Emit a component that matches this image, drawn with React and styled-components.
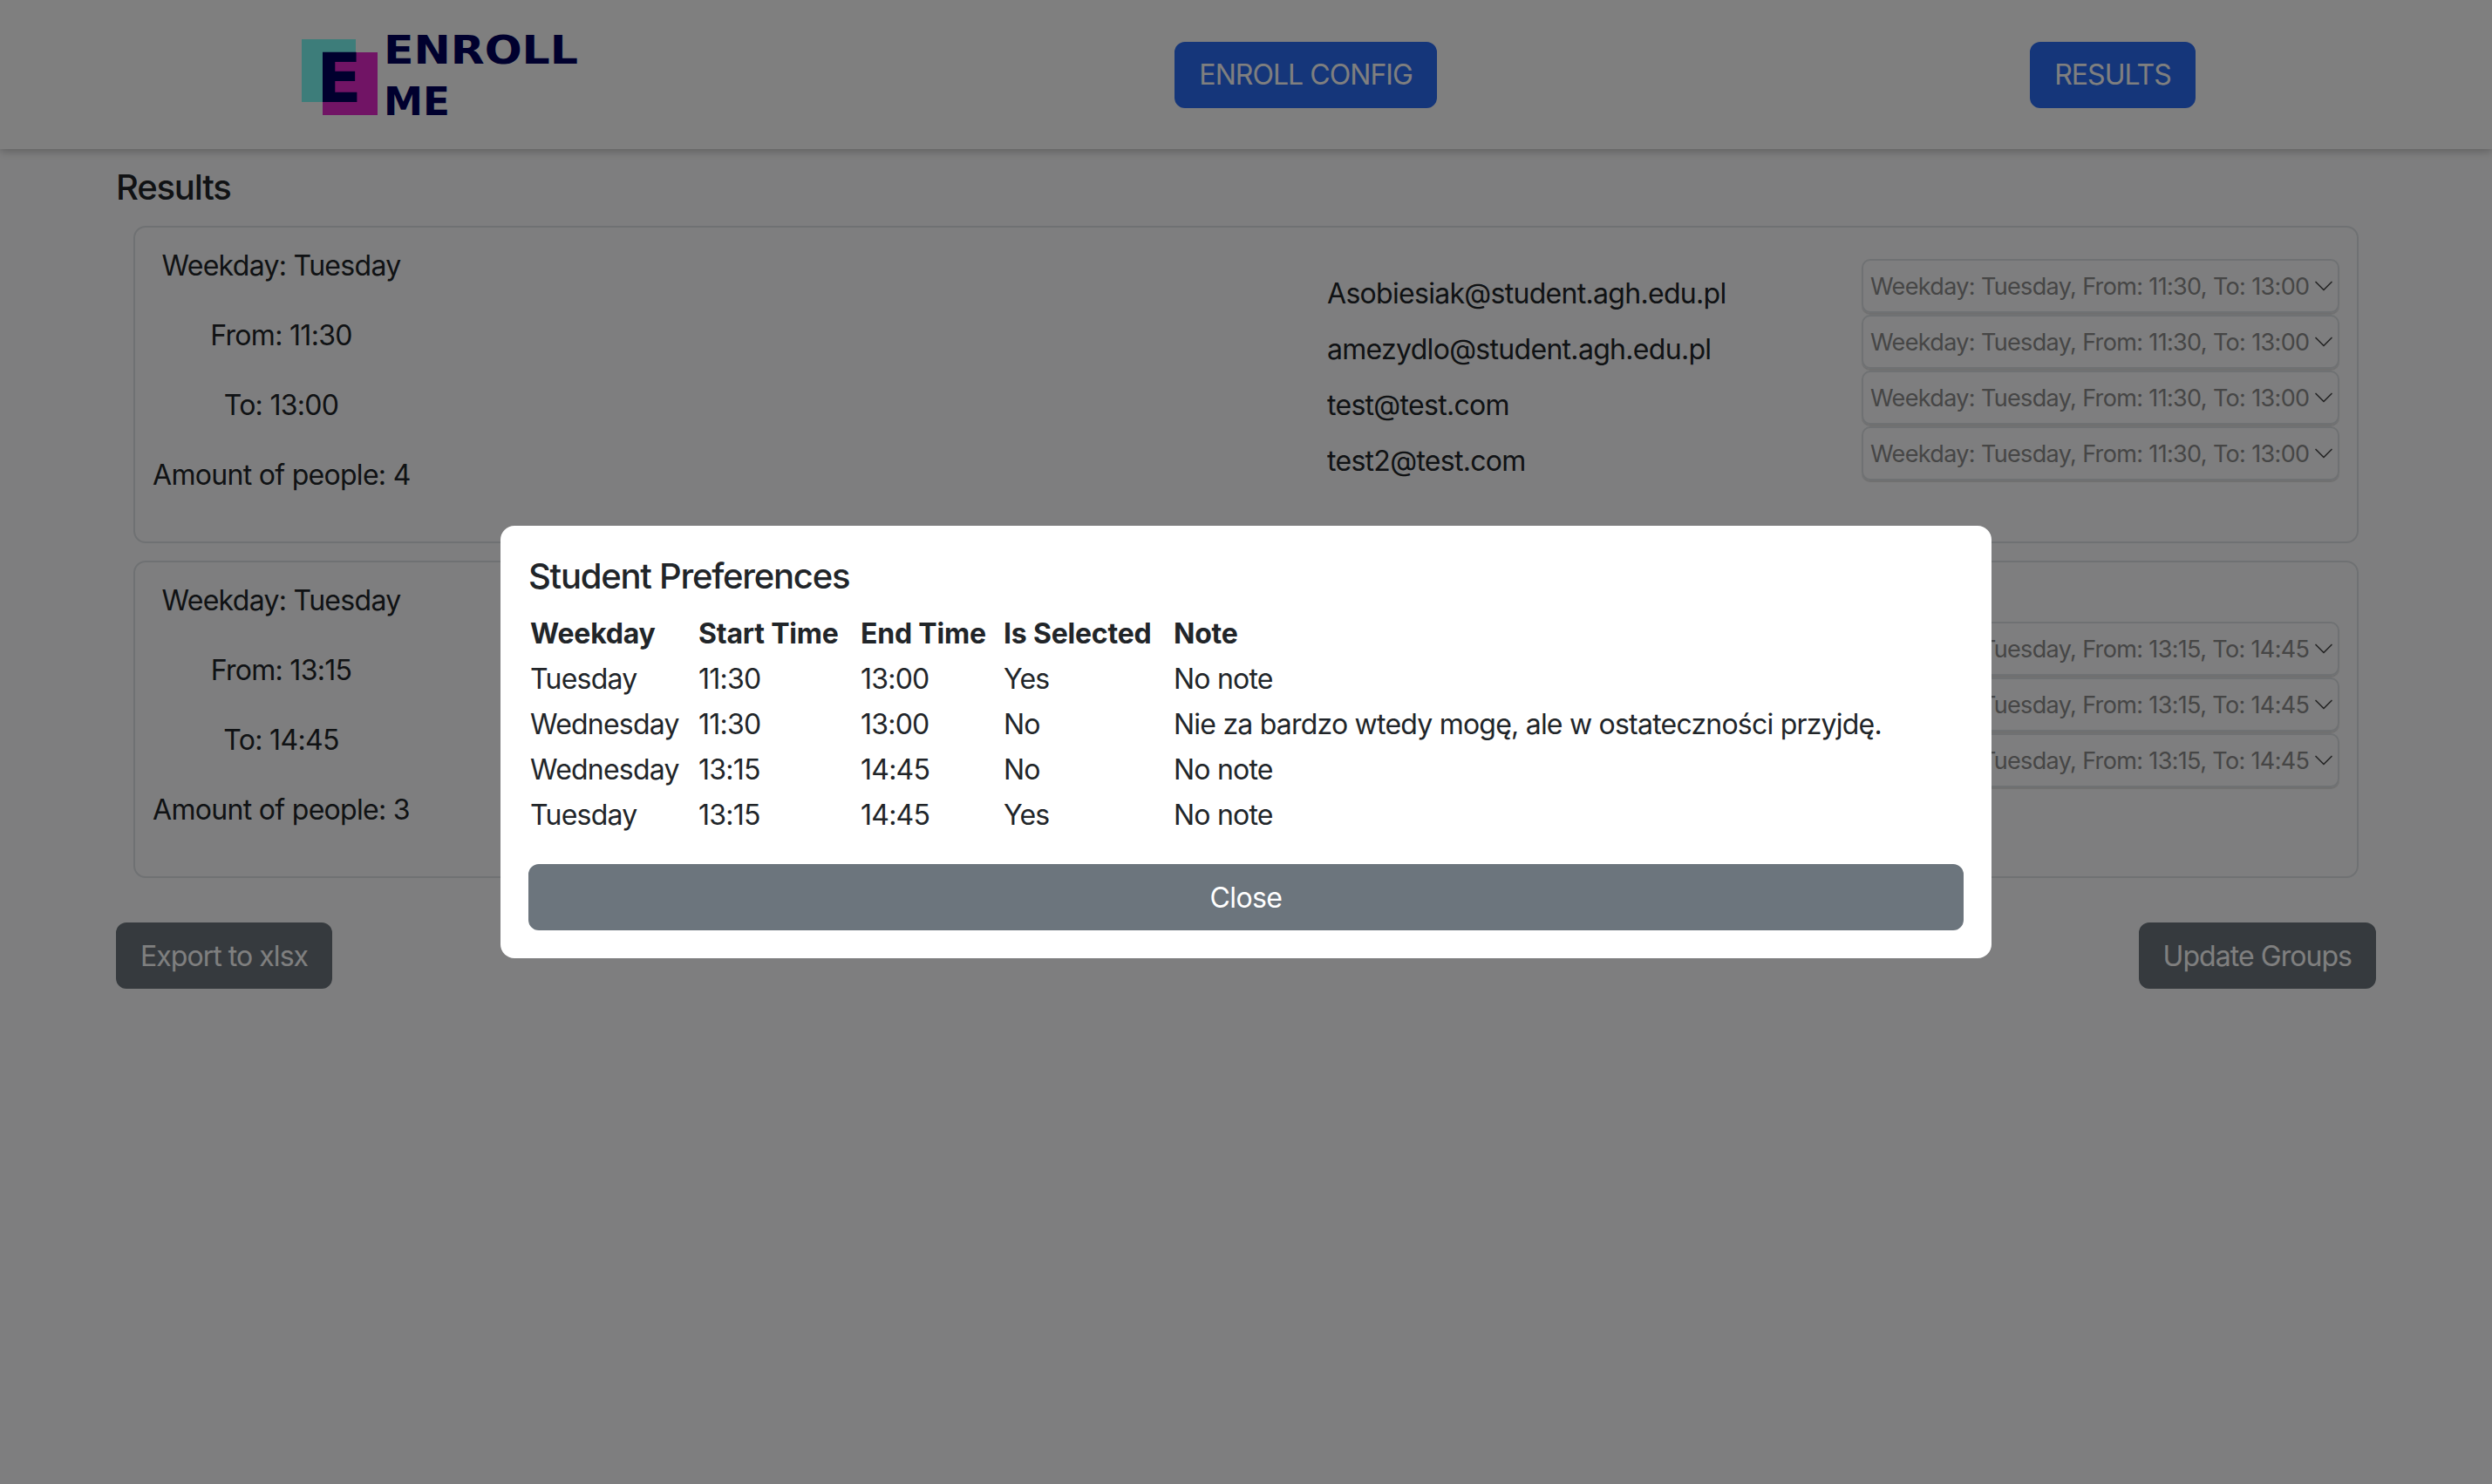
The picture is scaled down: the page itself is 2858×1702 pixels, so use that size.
import React from "react";
import styled, { createGlobalStyle } from "styled-components";

const Global = createGlobalStyle`
  html, body { margin: 0; padding: 0; background: #fdfdfe; }
  body {
    font-family: Inter, "Noto Sans", sans-serif;
    font-size: 32px;
    line-height: 48px;
    color: #212529;
  }
  * { box-sizing: border-box; }
`;

const Page = styled.div`
  min-height: 1702px;
  background: #fdfdfe;
`;

const Nav = styled.nav`
  height: 171px;
  background: #fff;
  display: flex;
  align-items: center;
  justify-content: space-around;
  box-shadow: 0 2px 10px rgba(0, 0, 0, 0.28);
`;

const LogoSvg = styled.svg`
  width: 327px;
  height: 100px;
  display: block;
  overflow: visible;
`;

const LogoWord = styled.text`
  font-family: "DejaVu Sans", sans-serif;
  font-weight: 700;
  font-size: 44px;
  fill: #00005c;
`;

const LogoMark = styled.text`
  font-family: "DejaVu Sans", sans-serif;
  font-weight: 700;
  font-size: 78px;
  fill: #00005c;
`;

const Button = styled.button`
  font: inherit;
  height: 76px;
  padding: 1px 26px 0;
  border: 2px solid ${(p) => p.$bg};
  border-radius: 12px;
  background: ${(p) => p.$bg};
  color: #fff;
  letter-spacing: -0.95px;
  white-space: nowrap;
`;

const WideButton = styled(Button)`
  width: 100%;
  display: block;
  margin-top: 32px;
  letter-spacing: -0.6px;
`;

const Container = styled.main`
  width: 2640px;
  margin: 0 auto;
  padding: 20px 24px 0;
`;

const Heading = styled.h4`
  margin: 0 0 20px;
  font-size: 40px;
  line-height: 48px;
  font-weight: 500;
  letter-spacing: -1.2px;
`;

const Card = styled.section`
  margin: 0 20px 20px;
  padding: 20px;
  border: 2px solid #dee2e6;
  border-radius: 14px;
  display: grid;
  grid-template-columns: 1347px 613px 548px;
`;

const Summary = styled.div`
  width: 295px;
  text-align: center;
  letter-spacing: -0.7px;
`;

const SummaryLine = styled.p`
  margin: 0 0 32px;
  white-space: nowrap;
`;

const Stack = styled.div`
  height: 288px;
  display: flex;
  flex-direction: column;
  justify-content: center;
`;

const Email = styled.div`
  height: 64px;
  padding-top: 16px;
  letter-spacing: -0.7px;
`;

const SelectRow = styled.div`
  position: relative;
  height: 64px;
`;

const Select = styled.select`
  appearance: none;
  display: block;
  width: 100%;
  height: 62px;
  padding: 0 24px 0 8px;
  border: 2px solid #dee2e6;
  border-radius: 10px;
  background: transparent;
  color: #8c8c8c;
  font-family: inherit;
  font-size: 27px;
  letter-spacing: -0.65px;
  box-shadow: 0 2px 1px rgba(0, 0, 0, 0.12);
`;

const Chevron = styled.svg`
  position: absolute;
  right: 6px;
  top: 19px;
  width: 24px;
  height: 24px;
  pointer-events: none;
`;

const Actions = styled.div`
  display: flex;
  justify-content: space-between;
  margin-top: 51px;
`;

const Overlay = styled.div`
  position: fixed;
  inset: 0;
  background: rgba(0, 0, 0, 0.5);
  display: flex;
  align-items: center;
  justify-content: center;
`;

const Modal = styled.div`
  width: 1710px;
  padding: 32px;
  background: #fff;
  border-radius: 16px;
`;

const ModalTitle = styled.h5`
  margin: 0 0 16px;
  padding-top: 2px;
  height: 48px;
  font-size: 40px;
  line-height: 48px;
  font-weight: 500;
  letter-spacing: -1.25px;
`;

const Table = styled.table`
  width: 100%;
  table-layout: fixed;
  border-collapse: collapse;
`;

const Column = styled.col`
  width: ${(p) => p.$w};
`;

const HeadCell = styled.th`
  padding: 4px 0 0 2px;
  text-align: left;
  font-weight: 700;
  letter-spacing: -0.2px;
  white-space: nowrap;
`;

const Cell = styled.td`
  padding: 4px 0 0 2px;
  letter-spacing: -0.78px;
  white-space: nowrap;
`;

const columns = ["193px", "186px", "164px", "195px", "auto"];

const groups = [
  {
    day: "Tuesday", from: "11:30", to: "13:00", people: 4,
    emails: ["Asobiesiak@student.agh.edu.pl", "amezydlo@student.agh.edu.pl", "test@test.com", "test2@test.com"],
  },
  {
    day: "Tuesday", from: "13:15", to: "14:45", people: 3,
    emails: ["test3@test.com", "test4@test.com", "test5@test.com"],
  },
];

const prefs = [
  ["Tuesday", "11:30", "13:00", "Yes", "No note"],
  ["Wednesday", "11:30", "13:00", "No", "Nie za bardzo wtedy mogę, ale w ostateczności przyjdę."],
  ["Wednesday", "13:15", "14:45", "No", "No note"],
  ["Tuesday", "13:15", "14:45", "Yes", "No note"],
];

const Logo = () => (
  <LogoSvg viewBox="0 0 327 100" role="img" aria-label="Enroll Me">
    <rect x="6" y="9" width="62" height="72" fill="#7afaf4" />
    <rect x="30" y="24" width="63" height="72" fill="#e228ca" />
    <LogoMark x="23" y="81" textLength="52" lengthAdjust="spacingAndGlyphs">E</LogoMark>
    <LogoWord x="100" y="37" textLength="223" lengthAdjust="spacingAndGlyphs">ENROLL</LogoWord>
    <LogoWord x="100" y="96" textLength="76" lengthAdjust="spacingAndGlyphs">ME</LogoWord>
  </LogoSvg>
);

export default function App() {
  return (
    <Page>
      <Global />
      <Nav>
        <Logo />
        <Button $bg="#2a6cf4">ENROLL CONFIG</Button>
        <Button $bg="#2a6cf4">RESULTS</Button>
      </Nav>
      <Container>
        <Heading>Results</Heading>
        {groups.map((g) => {
          const label = `Weekday: ${g.day}, From: ${g.from}, To: ${g.to}`;
          return (
            <Card key={g.from}>
              <Summary>
                <SummaryLine>Weekday: {g.day}</SummaryLine>
                <SummaryLine>From: {g.from}</SummaryLine>
                <SummaryLine>To: {g.to}</SummaryLine>
                <SummaryLine>Amount of people: {g.people}</SummaryLine>
              </Summary>
              <Stack>
                {g.emails.map((e) => (
                  <Email key={e}>{e}</Email>
                ))}
              </Stack>
              <Stack>
                {g.emails.map((e) => (
                  <SelectRow key={e}>
                    <Select defaultValue={label}>
                      <option>{label}</option>
                    </Select>
                    <Chevron viewBox="0 0 16 16" fill="none" stroke="#4a4a4a" strokeWidth="1.1" strokeLinecap="round" strokeLinejoin="round">
                      <path d="m2 5 6 6 6-6" />
                    </Chevron>
                  </SelectRow>
                ))}
              </Stack>
            </Card>
          );
        })}
        <Actions>
          <Button $bg="#6c757d">Export to xlsx</Button>
          <Button $bg="#6c757d">Update Groups</Button>
        </Actions>
      </Container>
      <Overlay>
        <Modal>
          <ModalTitle>Student Preferences</ModalTitle>
          <Table>
            <colgroup>
              {columns.map((w, i) => (
                <Column key={i} $w={w} />
              ))}
            </colgroup>
            <thead>
              <tr>
                {["Weekday", "Start Time", "End Time", "Is Selected", "Note"].map((h) => (
                  <HeadCell key={h}>{h}</HeadCell>
                ))}
              </tr>
            </thead>
            <tbody>
              {prefs.map((row, i) => (
                <tr key={i}>
                  {row.map((c, j) => (
                    <Cell key={j}>{c}</Cell>
                  ))}
                </tr>
              ))}
            </tbody>
          </Table>
          <WideButton $bg="#6c757d">Close</WideButton>
        </Modal>
      </Overlay>
    </Page>
  );
}
